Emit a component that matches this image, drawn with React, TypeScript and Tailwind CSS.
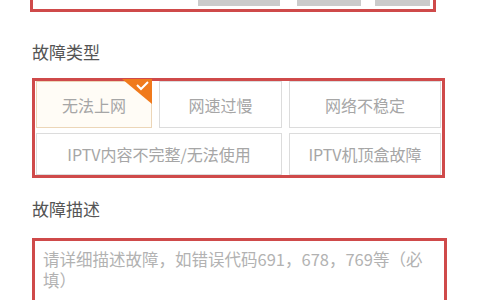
import React, { useState } from 'react'

const faultTypes = [
  { id: 'offline', label: '无法上网' },
  { id: 'slow', label: '网速过慢' },
  { id: 'unstable', label: '网络不稳定' },
  { id: 'iptv', label: 'IPTV内容不完整/无法使用', wide: true },
  { id: 'stb', label: 'IPTV机顶盒故障' },
]

const Corner: React.FC = () => (
  <svg className="absolute -top-[3px] -right-[1px]" width="30" height="25" viewBox="0 0 30 25">
    <polygon points="0,0 30,0 30,25" fill="#f07a1c" />
    <polyline points="15,6 19,10 26,3" fill="none" stroke="#fff" strokeWidth="2" />
  </svg>
)

const App: React.FC = () => {
  const [selected, setSelected] = useState('offline')
  const [desc, setDesc] = useState('')

  return (
    <div className="w-[480px] h-[300px] overflow-hidden bg-white font-['Noto_Sans_CJK_SC',sans-serif]">
      <div className="ml-[30px] w-[406px] h-[12px] border-x-[3px] border-b-[3px] border-[#cf4a4a] flex items-start">
        <div className="ml-[165px] w-[82px] h-[6px] bg-[#cbcbcb]" />
        <div className="ml-[17px] w-[64px] h-[6px] bg-[#cbcbcb]" />
        <div className="ml-[14px] w-[55px] h-[6px] bg-[#cbcbcb]" />
      </div>

      <div className="ml-[32px] mt-[32px] text-[17px] leading-[16px] text-[#555]">故障类型</div>

      <div className="ml-[32px] mt-[18px] w-[413px] h-[100px] border-[3px] border-[#cf4a4a] px-[1px]">
        <div className="grid grid-cols-[116px_123px_1fr] grid-rows-[47px_42px] gap-x-[7px] gap-y-[5px] h-full">
          {faultTypes.map((t) => {
            const active = t.id === selected
            return (
              <button
                key={t.id}
                onClick={() => setSelected(t.id)}
                className={
                  (t.wide ? 'col-span-2 ' : '') +
                  (active
                    ? 'relative border border-[#ecd6b8] bg-[#fffcf6] '
                    : 'relative border border-[#dcdcdc] bg-white ') +
                  'flex items-center justify-center text-[16px] text-[#a6a6a6]'
                }
              >
                {t.label}
                {active && <Corner />}
              </button>
            )
          })}
        </div>
      </div>

      <div className="ml-[32px] mt-[23px] text-[17px] leading-[16px] text-[#555]">故障描述</div>

      <div className="ml-[32px] mt-[21px] w-[415px] h-[80px] border-x-[3px] border-t-[3px] border-[#cf4a4a]">
        <textarea
          value={desc}
          onChange={(e) => setDesc(e.target.value)}
          placeholder="请详细描述故障，如错误代码691，678，769等（必填）"
          className="w-full h-full resize-none outline-none pt-[8px] pl-[8px] pr-[20px] text-[16.5px] leading-[21px] text-[#555] placeholder:text-[#b2b2b2]"
        />
      </div>
    </div>
  )
}

export default App
